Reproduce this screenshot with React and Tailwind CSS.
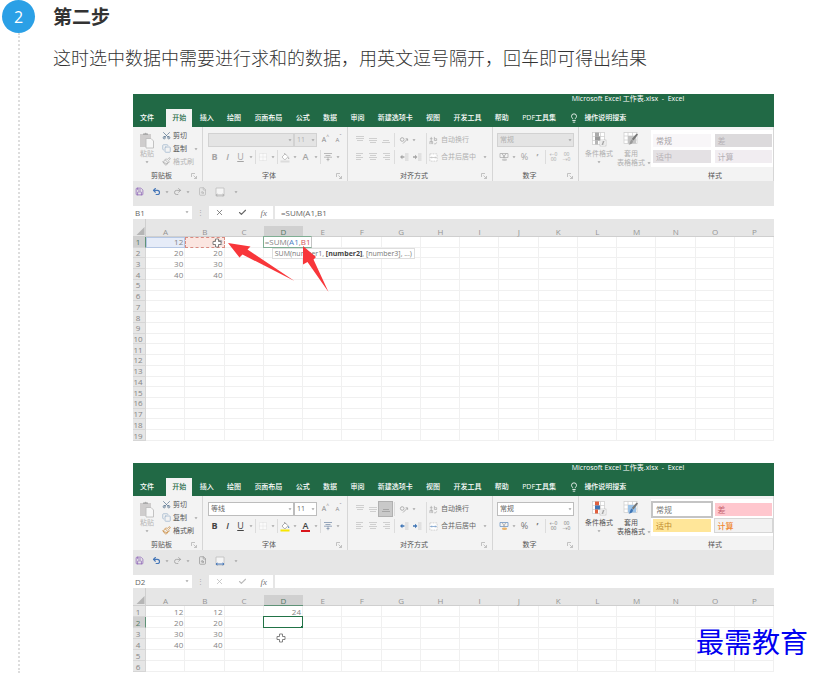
import React from "react";
import {
  Check,
  Copy,
  FileSearch,
  Lightbulb,
  Paintbrush,
  Redo2,
  Save,
  Scissors,
  Undo2,
  X,
} from "lucide-react";
import clsx from "clsx";

const COLUMNS = "ABCDEFGHIJKLMNOP".split("");
const DATA = { 1: 12, 2: 20, 3: 30, 4: 40 };
const TABS = [
  "开始",
  "插入",
  "绘图",
  "页面布局",
  "公式",
  "数据",
  "审阅",
  "新建选项卡",
  "视图",
  "开发工具",
  "帮助",
  "PDF工具集",
];

const Caret = ({ className }) => (
  <svg
    viewBox="0 0 8 8"
    className={clsx("h-2 w-2 shrink-0 fill-[#a5a5a5]", className)}
    aria-hidden="true"
  >
    <path d="M2.5 3.2h3L4 5.2z" />
  </svg>
);

const Divider = ({ className }) => (
  <span className={clsx("w-px shrink-0 self-stretch bg-[#dcdcdc]", className)} />
);

const Tool = ({ label, active, children }) => (
  <button
    type="button"
    aria-label={label}
    className={clsx(
      "flex h-[14px] w-[13px] shrink-0 items-center justify-center",
      active && "bg-[#c9c9c9] outline outline-[#b0b0b0]"
    )}
  >
    {children}
  </button>
);

const Lines = ({ rows, className }) => (
  <svg viewBox="0 0 10 10" className={clsx("h-[10px] w-[10px]", className)}>
    {rows.map(([x, y, w]) => (
      <rect key={y} x={x} y={y} width={w} height="1" fill="currentColor" />
    ))}
  </svg>
);

const Indent = ({ flip, color }) => (
  <svg viewBox="0 0 10 10" className="h-[10px] w-[10px]">
    <path d="M6 2h3.5M6 4h3.5M6 6h3.5M6 8h3.5" stroke="#c4c4c4" strokeWidth="0.8" />
    <path
      d={flip ? "M1 4.2h2V2.8L5.4 5 3 7.2V5.8H1z" : "M5.4 4.2h-2V2.8L1 5l2.4 2.2V5.8h2z"}
      fill={color}
    />
  </svg>
);

const PasteIcon = () => (
  <svg viewBox="0 0 16 18" className="h-[18px] w-4">
    <rect x="1" y="3" width="11" height="13" fill="#cfcdcd" />
    <path d="M4 4V2.5h1.5a1.2 1.2 0 0 1 2.2 0H9V4z" fill="#aaa" />
    <path d="M7 7.5h5l2.5 2.5v7H7z" fill="#f7f7f7" stroke="#bdbdbd" strokeWidth="0.9" />
  </svg>
);

const ConditionalIcon = ({ muted }) => (
  <svg viewBox="0 0 16 16" className="h-4 w-4">
    <rect x="1.5" y="1.5" width="12" height="12" fill="#fff" stroke="#ccc" strokeWidth="0.7" />
    <path d="M1.5 5.5h12M1.5 9.5h12M9.5 1.5v12" stroke="#ccc" strokeWidth="0.7" />
    <rect x="4" y="1.5" width="4" height="4" fill={muted ? "#aaa" : "#e0603e"} />
    <rect x="4" y="5.5" width="5" height="4" fill={muted ? "#999" : "#3f75b5"} />
    <rect x="4" y="9.5" width="3" height="4" fill={muted ? "#b5b5b5" : "#e0603e"} />
    <rect x="9" y="9" width="6" height="6" fill="#fff" stroke="#bbb" strokeWidth="0.6" />
    <path d="M10.5 11h3M10.5 13h3M13 10l-2 4" stroke="#777" strokeWidth="0.6" />
  </svg>
);

const TableFormatIcon = ({ muted }) => (
  <svg viewBox="0 0 16 16" className="h-4 w-4">
    <rect x="1" y="1.5" width="13" height="11" fill="#fff" stroke="#ccc" strokeWidth="0.7" />
    <path d="M1 5h13M1 9h13M5 1.5v11M9.5 1.5v11" stroke="#ccc" strokeWidth="0.7" />
    <rect x="5" y="5" width="8" height="7.5" fill={muted ? "#c4c4c4" : "#9cc3e8"} />
    <path d="M15 3.5l-4.5 6-1.7-1.4L13.6 2.6z" fill="#777" />
    <path d="M10 9.7c0 2-1.5 3.8-4.5 4 1.5-1 1.5-3.8 3-5.2z" fill={muted ? "#999" : "#3f75b5"} />
  </svg>
);

const PlusCursor = ({ className }) => (
  <svg viewBox="0 0 10 10" className={clsx("absolute h-[10px] w-[10px]", className)}>
    <path
      d="M3.5 1h3v2.5H9v3H6.5V9h-3V6.5H1v-3h2.5z"
      fill="#fff"
      stroke="#666"
      strokeWidth="0.8"
    />
  </svg>
);

const Group = ({ label, launcher = true, footerClass, children }) => (
  <section className="flex min-w-0 flex-col border-r border-[#d6d6d6]">
    <div className="min-h-0 flex-1">{children}</div>
    <div className={clsx("flex h-[10px] items-center text-[#555]", footerClass)}>
      <span className="flex-1 text-center">{label}</span>
      {launcher && (
        <button type="button" aria-label={label} className="w-3">
          <svg viewBox="0 0 8 8" className="h-2 w-2" fill="none" stroke="#b5b5b5" strokeWidth="0.8">
            <path d="M1.5 5V1.5H5M3.5 3.5l3 3M6.5 4v2.5H4" />
          </svg>
        </button>
      )}
    </div>
  </section>
);

const Combo = ({ label, value, muted, className }) => (
  <div className={clsx("relative h-[14px]", className)}>
    <select
      aria-label={label}
      defaultValue={value}
      className={clsx(
        "block h-full w-full appearance-none border pl-[2px] leading-[10px]",
        muted
          ? "border-[#d2d2d2] bg-[#e4e4e4] text-[#b0b0b0]"
          : "border-[#bdbdbd] bg-white text-[#666]"
      )}
    >
      <option>{value}</option>
    </select>
    <Caret className="pointer-events-none absolute top-[3px] right-0" />
  </div>
);

const ClipboardGroup = ({ muted }) => (
  <Group label="剪贴板">
    <div className="flex pt-[2px] pl-[6px]">
      <button type="button" className="flex w-4 flex-col items-center pt-[2px] text-[#b5b5b5]">
        <PasteIcon />
        <span className="leading-[9px]">粘贴</span>
        <Caret />
      </button>
      <div className="flex flex-col items-start pl-[7px] text-[#555]">
        <button type="button" className="flex h-[13px] items-center gap-[2px]">
          <Scissors className="h-[9px] w-[9px] -rotate-90 text-[#5b7690]" />
          剪切
        </button>
        <button type="button" className="flex h-[13px] items-center gap-[2px]">
          <Copy className="h-[9px] w-[9px] text-[#9db4cc]" />
          复制
          <Caret className="ml-[3px]" />
        </button>
        <button
          type="button"
          className={clsx("flex h-[13px] items-center gap-[2px]", muted && "text-[#b5b5b5]")}
        >
          <Paintbrush
            className={clsx("h-[9px] w-[9px]", muted ? "text-[#aaa]" : "text-[#c98a3c]")}
          />
          格式刷
        </button>
      </div>
    </div>
  </Group>
);

const FontGroup = ({ muted }) => (
  <Group label="字体">
    <div className="flex flex-col gap-[3px] pt-[6px] pl-[5px]">
      <div className="flex items-center">
        <Combo label="字体" value={muted ? "" : "等线"} muted={muted} className="w-[86px]" />
        <Combo label="字号" value="11" muted={muted} className="w-[23px]" />
        <div className="flex pl-[2px] text-[#8a8a8a]">
          <Tool label="增大字号">
            A<span className="self-start text-[5px] leading-[7px]">^</span>
          </Tool>
          <Tool label="减小字号">
            <span className="text-[6px]">A</span>
            <span className="self-start text-[5px] leading-[7px]">ˇ</span>
          </Tool>
        </div>
      </div>
      <div
        className={clsx(
          "flex items-center text-[9px]",
          muted ? "text-[#a5a5a5]" : "text-[#444]"
        )}
      >
        <Tool label="加粗">
          <b>B</b>
        </Tool>
        <Tool label="倾斜">
          <i className="font-semibold">I</i>
        </Tool>
        <Tool label="下划线">
          <span className="underline">U</span>
        </Tool>
        <Caret />
        <Divider />
        <Tool label="边框">
          <svg viewBox="0 0 10 10" className="h-[10px] w-[10px]" fill="#fafafa" stroke="#d8d8d8">
            <path d="M1.5 1.5h7v7h-7zM5 1.5v7M1.5 5h7" strokeWidth="0.7" strokeDasharray="1 1" />
          </svg>
        </Tool>
        <Caret />
        <Divider />
        <Tool label="填充颜色">
          <svg viewBox="0 0 10 11" className="h-[11px] w-[10px]">
            <path
              d="M2 5l3.2-3.2L8 4.8 4.8 8zM4 1l2 2"
              fill="#fff"
              stroke={muted ? "#b5b5b5" : "#9a9a9a"}
              strokeWidth="0.8"
            />
            <path d="M8.7 5c.8 1.2.8 2 0 2s-.8-.8 0-2z" fill={muted ? "#aaa" : "#3f75b5"} />
            <rect x="0.5" y="8.5" width="9" height="2" fill={muted ? "#dcdcdc" : "#f7e600"} />
          </svg>
        </Tool>
        <Caret />
        <Tool label="字体颜色">
          <span
            className={clsx(
              "flex w-[9px] flex-col items-center border-b-2 leading-[9px] font-semibold",
              muted ? "border-transparent" : "border-[#d9151b]"
            )}
          >
            A
          </span>
        </Tool>
        <Caret />
        <Divider />
        <Tool label="拼音指南">
          <svg
            viewBox="0 0 10 10"
            className="h-[10px] w-[10px]"
            fill="none"
            stroke={muted ? "#aaa" : "#7f93ad"}
            strokeWidth="0.8"
          >
            <path d="M1 1.5h8M2.5 3.5h5M1 5.2h8M5 5.2v4M3.5 7.5h3" />
          </svg>
        </Tool>
        <Caret />
      </div>
    </div>
  </Group>
);

const AlignGroup = ({ muted }) => {
  const arrow = muted ? "#a5a5a5" : "#3f75b5";
  return (
    <Group label="对齐方式">
      <div className="flex pt-[6px] pl-[5px]">
        <div className="flex w-[70px] flex-col gap-[3px] text-[#cfcfcf]">
          <div className="flex items-center">
            <Tool label="顶端对齐">
              <Lines rows={[[1, 1, 8], [1, 3, 8], [2, 5, 6]]} />
            </Tool>
            <Tool label="垂直居中">
              <Lines rows={[[1, 3, 8], [1, 5, 8], [2, 7, 6]]} />
            </Tool>
            <Tool label="底端对齐" active={!muted}>
              <Lines rows={[[2, 5, 6], [1, 7, 8]]} className={clsx(!muted && "text-[#a5a5a5]")} />
            </Tool>
            <Divider className="mx-[2px]" />
            <Tool label="方向">
              <svg viewBox="0 0 10 10" className="h-[10px] w-[10px]" fill="none" stroke="#a0a0a0">
                <circle cx="3.2" cy="4.5" r="1.8" strokeWidth="0.8" />
                <path d="M4 8.5L8.5 4M6.600 3.800h2v2" strokeWidth="0.8" />
              </svg>
            </Tool>
            <Caret />
          </div>
          <div className="flex items-center">
            <Tool label="左对齐">
              <Lines rows={[[1, 1, 7], [1, 3, 5], [1, 5, 7], [1, 7, 5]]} />
            </Tool>
            <Tool label="居中">
              <Lines rows={[[1, 1, 8], [2, 3, 6], [1, 5, 8], [2, 7, 6]]} />
            </Tool>
            <Tool label="右对齐">
              <Lines rows={[[2, 1, 7], [4, 3, 5], [2, 5, 7], [4, 7, 5]]} />
            </Tool>
            <Divider className="mx-[2px]" />
            <Tool label="减少缩进量">
              <Indent color={arrow} />
            </Tool>
            <Tool label="增加缩进量">
              <Indent flip color={arrow} />
            </Tool>
          </div>
        </div>
        <Divider className="ml-[3px]" />
        <div
          className={clsx(
            "flex flex-col items-start gap-[3px] pl-[2px]",
            muted ? "text-[#b0b0b0]" : "text-[#666]"
          )}
        >
          <button type="button" className="flex h-[14px] items-center gap-[3px]">
            <svg viewBox="0 0 10 10" className="h-[9px] w-[9px]" fill="none" stroke="#aaa">
              <path d="M1 3h3M2.500 1v8M1 9V6h3v3M6 1v4M6 3h2.500v2H6M8.500 7c0 1.500-1 1.800-2.800 1.800" strokeWidth="0.8" />
            </svg>
            自动换行
          </button>
          <button type="button" className="flex h-[14px] items-center gap-[3px]">
            <svg viewBox="0 0 10 10" className="h-[9px] w-[9px]" fill="#fff" stroke="#c4c4c4">
              <path d="M1 1h8v8H1z" strokeWidth="0.8" strokeDasharray="2 1" />
              <path d="M2 5h6M3 4L2 5l1 1M7 4l1 1-1 1" fill="none" stroke={arrow} strokeWidth="0.6" />
            </svg>
            合并后居中
            <Caret className="ml-[2px]" />
          </button>
        </div>
      </div>
    </Group>
  );
};

const NumberGroup = ({ muted }) => (
  <Group label="数字">
    <div className="flex flex-col gap-[3px] px-1 pt-[6px]">
      <Combo label="数字格式" value="常规" muted={muted} className="w-full" />
      <div
        className={clsx(
          "flex items-center text-[9px]",
          muted ? "text-[#a5a5a5]" : "text-[#777]"
        )}
      >
        <Tool label="会计数字格式">
          <svg viewBox="0 0 10 10" className="h-[10px] w-[10px]" fill="none">
            <path d="M1 1.500h8v4H1z" stroke={muted ? "#b0b0b0" : "#6f97c4"} strokeWidth="0.8" />
            <path d="M3 1.500l2 3 2-3M5 4v2" stroke="#999" strokeWidth="0.7" />
            <ellipse cx="5.5" cy="7.7" rx="2.6" ry="1.2" fill={muted ? "#c9c9c9" : "#e8b36b"} />
          </svg>
        </Tool>
        <Caret />
        <Tool label="百分比样式">%</Tool>
        <Tool label="千位分隔样式">
          <b>’</b>
        </Tool>
        <Divider className="mx-[1px]" />
        <Tool label="增加小数位数">
          <span className="text-[5px] leading-[5px]">
            ←0
            <br />
            00
          </span>
        </Tool>
        <Tool label="减少小数位数">
          <span className="text-[5px] leading-[5px]">
            00
            <br />
            →0
          </span>
        </Tool>
      </div>
    </div>
  </Group>
);

const StyleGroup = ({ muted }) => {
  const cell = "h-[13px] px-[3px] text-left text-[8px] leading-[13px]";
  return (
    <Group label="样式" launcher={false} footerClass="pl-[78px]">
      <div className="flex pt-[3px]">
        <div
          className={clsx(
            "flex w-[72px] shrink-0 justify-between pt-[1px] pr-[6px] pl-[6px]",
            muted ? "text-[#b0b0b0]" : "text-[#555]"
          )}
        >
          <button type="button" className="flex w-7 flex-col items-center leading-[9px]">
            <ConditionalIcon muted={muted} />
            <span className="pt-[2px] whitespace-nowrap">条件格式</span>
            <Caret />
          </button>
          <button type="button" className="flex w-7 flex-col items-center leading-[9px]">
            <TableFormatIcon muted={muted} />
            <span className="pt-[2px]">套用</span>
            <span className="flex items-center whitespace-nowrap">
              <span className="pl-1">表格格式</span>
              <Caret className="-mr-1" />
            </span>
          </button>
        </div>
        <div className="grid flex-1 grid-cols-2 gap-x-1 gap-y-[3px] bg-white py-1 pr-px pl-[2px]">
          <button
            type="button"
            className={clsx(
              cell,
              muted ? "bg-[#f8f6f8] text-[#a5a0a5]" : "bg-white text-[#777] outline-2 outline-[#c4c4c4]"
            )}
          >
            常规
          </button>
          <button
            type="button"
            className={clsx(cell, muted ? "bg-[#dcdadc] text-[#b5b0b5]" : "bg-[#ffc7ce] text-[#c4606c]")}
          >
            差
          </button>
          <button
            type="button"
            className={clsx(cell, muted ? "bg-[#e4e1e4] text-[#b5b0b5]" : "bg-[#ffe699] text-[#c08a2c]")}
          >
            适中
          </button>
          <button
            type="button"
            className={clsx(
              cell,
              muted
                ? "bg-[#f1edf1] text-[#b5b0b5]"
                : "bg-[#f2f2f2] font-medium text-[#f08a35] outline outline-[#d6d6d6]"
            )}
          >
            计算
          </button>
        </div>
      </div>
    </Group>
  );
};

const TitleBar = () => (
  <header className="bg-[#216945] text-white">
    <div className="h-[15px] pr-[14%] text-right leading-[9px]">
      Microsoft Excel 工作表.xlsx&nbsp; -&nbsp; Excel
    </div>
    <nav className="flex h-[18px] w-[77%] items-stretch justify-between font-medium whitespace-nowrap">
      <button type="button" className="pr-[11px] pl-[7px]">
        文件
      </button>
      {TABS.map((tab) => (
        <button
          key={tab}
          type="button"
          className={clsx("px-[6px]", tab === "开始" && "bg-[#f3f3f3] text-[#216945]")}
        >
          {tab}
        </button>
      ))}
      <button type="button" className="flex items-center gap-[5px] pl-[6px]">
        <Lightbulb className="h-[10px] w-[10px]" />
        操作说明搜索
      </button>
    </nav>
  </header>
);

const QuickAccess = ({ muted }) => (
  <div className="flex h-[25px] items-center bg-[#e6e6e6] pb-1 text-[#9a9a9a]">
    <button type="button" aria-label="保存" className="flex w-[13px] justify-center">
      <Save className="h-[9px] w-[9px] text-[#8b62b5]" />
    </button>
    <button type="button" aria-label="撤消" className="ml-1 flex w-[13px] justify-center">
      <Undo2 strokeWidth={3} className="h-[9px] w-[9px] text-[#4677b8]" />
    </button>
    <Caret />
    <button type="button" aria-label="恢复" className="flex w-[13px] justify-center">
      <Redo2 className="h-[9px] w-[9px]" />
    </button>
    <Caret />
    <button type="button" aria-label="打印预览" className="ml-1 flex w-[13px] justify-center">
      <FileSearch className={clsx("h-[9px] w-[9px]", muted && "text-[#b8b8b8]")} />
    </button>
    <button type="button" aria-label="页面设置" className="ml-1 flex w-[13px] justify-center">
      <svg viewBox="0 0 10 10" className="h-[10px] w-[10px]">
        <path d="M1 1h8v8H1z" fill="#f5f5f5" stroke="#bdbdbd" strokeWidth="0.8" />
        <path d="M1 8h8M2.500 7L1 8l1.500 1M7.500 7L9 8 7.500 9" fill="none" stroke={muted ? "#b5b5b5" : "#4677b8"} />
      </svg>
    </button>
    <Caret className="ml-[6px]" />
  </div>
);

const FormulaBar = ({ muted, cell, formula }) => (
  <div className="flex h-[13px] bg-[#e6e6e6] text-[#666]">
    <div className="relative w-[59px] bg-white">
      <input
        aria-label="名称框"
        defaultValue={cell}
        className="block h-full w-full pl-[2px] text-[8px]"
      />
      <Caret className="pointer-events-none absolute top-[2px] right-px" />
    </div>
    <span className="w-[17px] text-center leading-[13px] text-[#aaa]">⋮</span>
    <div
      className={clsx(
        "flex w-16 items-center justify-between bg-white px-[6px]",
        muted ? "text-[#666]" : "text-[#bbb]"
      )}
    >
      <button type="button" aria-label="取消">
        <X className="h-[9px] w-[9px]" />
      </button>
      <button type="button" aria-label="输入">
        <Check strokeWidth={3} className="h-[9px] w-[9px]" />
      </button>
      <button
        type="button"
        aria-label="插入函数"
        className="font-['Liberation_Serif',serif] text-[9px] text-[#777] italic"
      >
        fx
      </button>
    </div>
    <input
      aria-label="编辑栏"
      defaultValue={formula}
      className="ml-[2px] min-w-0 flex-1 bg-white pl-[6px] text-[8px]"
    />
  </div>
);

const FormulaEditor = () => (
  <>
    <div className="absolute -top-px -left-px z-10 h-3 border border-[#7fae93] border-r-[#c4c4c4] bg-white pl-px leading-[10px] whitespace-nowrap">
      =SUM(<span className="text-[#4f7fc4]">A1</span>,
      <span className="text-[#d0555a]">B1</span>
    </div>
    <div className="absolute top-[11px] left-2 z-10 border border-[#dedede] bg-white px-[2px] text-[7px] leading-[9px] whitespace-nowrap text-[#777]">
      SUM(number1, <b className="text-[#444]">[number2]</b>, [number3], ...)
    </div>
  </>
);

const Arrows = () => (
  <svg
    viewBox="0 0 110 60"
    className="pointer-events-none absolute top-[2px] left-8 z-20 h-[60px] w-[110px] overflow-visible fill-[#f8363a]"
    aria-hidden="true"
  >
    <path d="M11 4L33.500 7.500L30.500 10.500L77.500 42L25.500 15.500L22.500 18.500z" />
    <path d="M86 7L99 18L96.500 20.500L111.500 53L90.500 23L86 25.500z" />
  </svg>
);

const Sheet = ({ editing, rowCount }) => {
  const activeRow = editing ? 1 : 2;
  const rows = Array.from({ length: rowCount }, (_, i) => i + 1);

  const valueOf = (col, row) => {
    if (col === "A" || col === "B") return DATA[row];
    if (col === "D" && row === 1 && !editing) return 24;
    return null;
  };

  return (
    <table
      className={clsx(
        "w-full table-fixed border-separate border-spacing-0 bg-white text-[8px] leading-[9px] text-[#858585]",
        rowCount > 10 ? "h-[222px]" : "h-[84px]"
      )}
    >
      <thead>
        <tr className="h-[18px] bg-[#e6e6e6] align-bottom">
          <th className="w-[13px] border-r border-b border-[#cfcfcf] p-0">
            <svg viewBox="0 0 10 10" className="ml-auto h-[10px] w-[10px] fill-[#b5b5b5]">
              <path d="M9.500 1v8h-8z" />
            </svg>
          </th>
          {COLUMNS.map((col) => (
            <th
              key={col}
              scope="col"
              className={clsx(
                "border-b p-0 font-normal",
                col === "D"
                  ? "border-[#5f9277] bg-linear-to-t from-[#d0d0d0] from-60% to-[#e6e6e6] to-60% text-[#557a66]"
                  : "border-[#cfcfcf] text-[#959595]"
              )}
            >
              {col}
            </th>
          ))}
        </tr>
      </thead>
      <tbody>
        {rows.map((row) => (
          <tr key={row}>
            <th
              scope="row"
              className={clsx(
                "border-r border-b p-0 pr-[2px] text-center font-normal",
                row === activeRow
                  ? "border-r-[#5f9277] border-b-[#d6d6d6] bg-[#d0d0d0] text-[#557a66]"
                  : "border-[#d6d6d6] bg-[#e6e6e6]"
              )}
            >
              {row}
            </th>
            {COLUMNS.map((col) => {
              const key = `${col}${row}`;
              return (
                <td
                  key={key}
                  className={clsx(
                    "relative border-r border-b border-[#f0f0f0] p-0 pr-[1px] text-right",
                    editing && key === "A1" && "bg-[#e6ecf8] outline -outline-offset-1 outline-[#b5c7e4]",
                    editing &&
                      key === "B1" &&
                      "bg-[#fbe6e1] outline -outline-offset-1 outline-[#d98a80] outline-dashed"
                  )}
                >
                  {valueOf(col, row)}
                  {editing && key === "B1" && <PlusCursor className="top-px right-[2px]" />}
                  {editing && key === "D1" && <FormulaEditor />}
                  {editing && key === "B1" && <Arrows />}
                  {!editing && key === "D2" && (
                    <span className="absolute -inset-px z-10 border border-[#217346] after:absolute after:-right-px after:-bottom-px after:h-[2px] after:w-[2px] after:bg-[#217346]" />
                  )}
                  {!editing && key === "D3" && <PlusCursor className="top-[5px] left-3 z-10" />}
                </td>
              );
            })}
          </tr>
        ))}
      </tbody>
    </table>
  );
};

const ExcelWindow = ({ editing = false, cell, formula = "", rowCount }) => (
  <div className="overflow-hidden font-['Open_Sans','Noto_Sans_CJK_SC',sans-serif] text-[7px] leading-[10px]">
    <TitleBar />
    <div className="grid h-[54px] grid-cols-[70fr_145fr_145fr_86fr_195fr] bg-[#f3f3f3]">
      <ClipboardGroup muted={editing} />
      <FontGroup muted={editing} />
      <AlignGroup muted={editing} />
      <NumberGroup muted={editing} />
      <StyleGroup muted={editing} />
    </div>
    <QuickAccess muted={editing} />
    <FormulaBar muted={editing} cell={cell} formula={formula} />
    <Sheet editing={editing} rowCount={rowCount} />
  </div>
);

export default function App() {
  return (
    <main className="relative flex h-screen overflow-hidden bg-white font-['Noto_Sans_CJK_SC',sans-serif] text-[#333]">
      <div className="ml-[2px] flex w-[33px] shrink-0 flex-col items-center">
        <span className="flex h-[33px] w-[33px] shrink-0 items-center justify-center rounded-full bg-[#2ba0e6] font-['Open_Sans',sans-serif] text-base text-white">
          2
        </span>
        <span className="flex-1 border-l-2 border-dotted border-[#ddd]" />
      </div>
      <article className="min-w-0 flex-1 pl-[18px]">
        <h2 className="text-[19px] leading-8 font-bold">第二步</h2>
        <p className="pt-[11px] text-lg leading-7 font-light">
          这时选中数据中需要进行求和的数据，用英文逗号隔开，回车即可得出结果
        </p>
        <div className="flex flex-col gap-[22px] pt-[23px] pr-[42px] pl-20">
          <ExcelWindow editing cell="B1" formula="=SUM(A1,B1" rowCount={19} />
          <ExcelWindow cell="D2" rowCount={6} />
        </div>
      </article>
      <p className="absolute right-2 bottom-[14px] font-['KaiTi','Noto_Sans_CJK_SC',serif] text-[28px] leading-9 text-[#0000f0]">
        最需教育
      </p>
    </main>
  );
}
